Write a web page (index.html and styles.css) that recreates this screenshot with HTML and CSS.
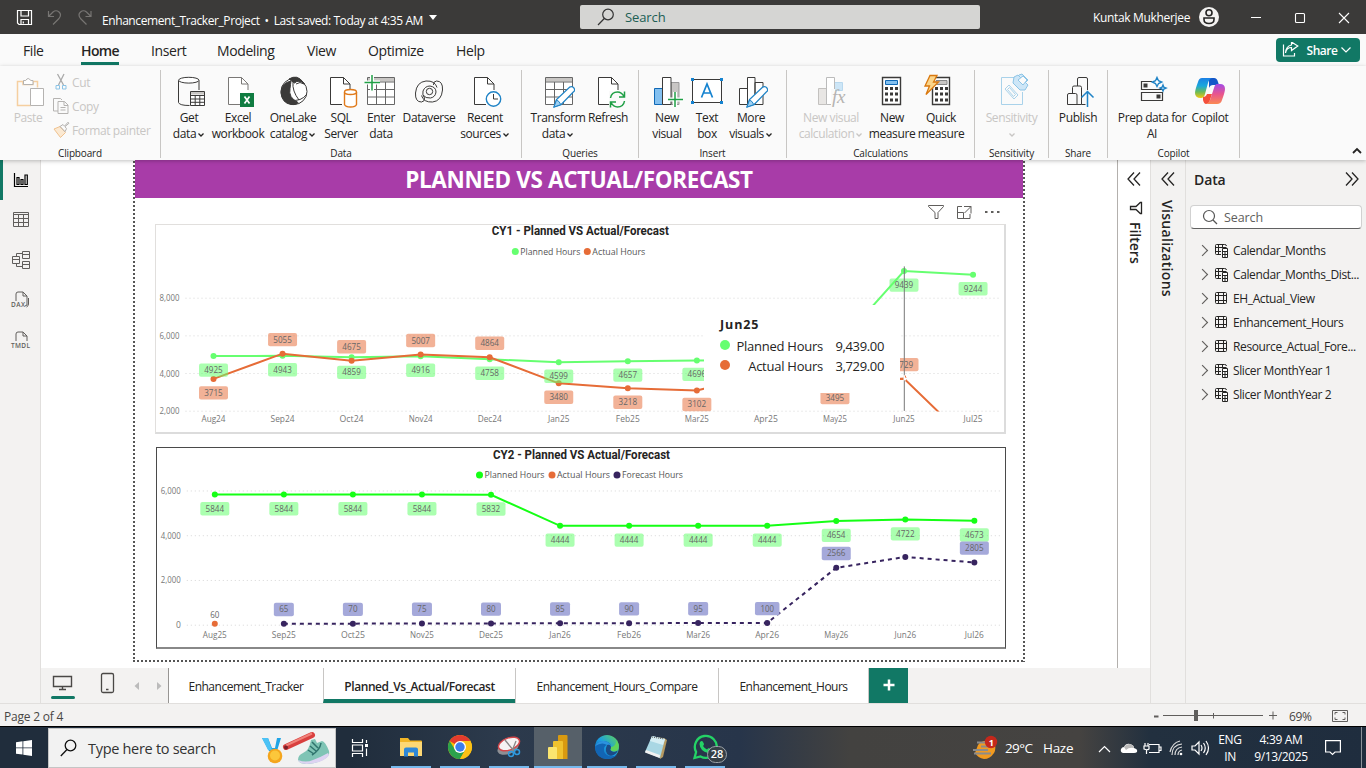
FILE: index.html
```html
<!DOCTYPE html>
<html lang="en">
<head>
<meta charset="utf-8">
<title>Enhancement_Tracker_Project</title>
<link rel="stylesheet" href="styles.css">
</head>
<body>
<svg width="0" height="0" class="defs">
  <defs>
    <symbol id="page" viewBox="0 0 34 34"><path d="M7.500 2.500h13l6.500 6.500v21h-19.500z" fill="#fff" stroke="none"/><path d="M19 29.500H7.500v-27h13l6.500 6.500v6M20.500 2.500v6.500h6.500"/></symbol>
    <symbol id="pencil" viewBox="0 0 34 34"><path d="M13 32l2.500-7.500L28.500 12.200q3-1.500 4.500 1t-.5 3.600L20 29.600z" fill="#fff" stroke="#1f83c6" stroke-width="1.300"/><path d="M13 32l2.500-7q3 1 4.300 4.600z" fill="#9fd0f2" stroke="#1f83c6"/></symbol>
    <symbol id="tbl" viewBox="0 0 16 16"><path d="M3.500 2.500h9q1 0 1 1v9q0 1-1 1h-9q-1 0-1-1v-9q0-1 1-1zM5.500 2.500v11M10.500 2.500v11M2.500 5.500h11M2.500 10.500h11" fill="none" stroke="#252423"/></symbol>
    <symbol id="ctbl" viewBox="0 0 16 16"><path d="M8 12.500H3.500q-1 0-1-1v-8q0-1 1-1h8q2 0 2 1.500M5.500 2.500v10M9.500 2.500v3M2.500 5.500h11M2.500 9.500H8" fill="none" stroke="#252423"/><path d="M9.500 6.500h5v9h-5z" fill="#fff" stroke="#252423"/><path d="M9.500 9.500h5M9.500 12.500h5M12 9.500v6" stroke="#252423" fill="none"/></symbol>
    <symbol id="dbl" viewBox="0 0 16 16"><path d="M8 1.500L2 8l6 6.500M14 1.500L8 8l6 6.500" fill="none" stroke="#252423" stroke-width="1.300"/></symbol>
    <symbol id="chev" viewBox="0 0 8 6"><path d="M1.500 1.500L4 4l2.500-2.500" fill="none" stroke="currentColor" stroke-width="1.300"/></symbol>
    <linearGradient id="cpA" x1="0" y1="0" x2="0" y2="1"><stop offset="0" stop-color="#1b7fe5"/><stop offset=".4" stop-color="#19a8dc"/><stop offset=".7" stop-color="#6dbb57"/><stop offset="1" stop-color="#f4c80f"/></linearGradient>
    <linearGradient id="cpB" x1="0" y1="0" x2="0" y2="1"><stop offset="0" stop-color="#a34be6"/><stop offset=".5" stop-color="#e8548f"/><stop offset="1" stop-color="#fb8a52"/></linearGradient>
    <linearGradient id="edgeG" x1="0" y1="1" x2="1" y2="0"><stop offset="0" stop-color="#0c59a4"/><stop offset=".5" stop-color="#1b9de2"/><stop offset="1" stop-color="#64d84e"/></linearGradient>
  </defs>
</svg>

<header class="titlebar">
  <svg class="quick" width="84" height="34" viewBox="0 0 84 34" fill="none"><path d="M4 10.500h14v14H5.500L4 23z M7.500 10.500v5.500h7.500v-5.500M7.500 24.500v-5h7.500v5M9.800 21.500v2" transform="translate(.5 0)" stroke="#fff" stroke-width="1.200"/><path d="M35.500 11v5.500h5.500M35.500 16.500l4.500-4.500q3-2.500 6 0t0 6.500l-6 6" stroke="#777573" stroke-width="1.200"/><path d="M78 11v5.500h-5.500M78 16.500l-4.500-4.500q-3-2.500-6 0t0 6.500l6 6" stroke="#777573" stroke-width="1.200"/></svg>
  <span class="doc">Enhancement_Tracker_Project<i>•</i>Last saved: Today at 4:35 AM</span>
  <span class="caret"></span>
  <div class="topsearch"><svg width="18" height="18" viewBox="0 0 18 18" fill="none" stroke="#333" stroke-width="1.200"><circle cx="11" cy="6.500" r="5.300"/><path d="M7.300 10.500L1 17"/></svg><span>Search</span></div>
  <span class="user">Kuntak Mukherjee</span>
  <svg class="avatar" width="20" height="20" viewBox="0 0 20 20"><circle cx="10" cy="10" r="10" fill="#f3f2f1"/><circle cx="10" cy="5.800" r="3" fill="none" stroke="#252423" stroke-width="1.600"/><path d="M5 11h10v1.500q0 4-5 4t-5-4z" fill="none" stroke="#252423" stroke-width="1.600"/></svg>
  <svg class="winbtns" width="110" height="34" viewBox="0 0 110 34" fill="none" stroke="#fff" stroke-width="1.100"><path d="M5 17.500h10M93 13l10 10M103 13L93 23"/><rect x="49.500" y="13.500" width="9" height="9" rx="1"/></svg>
</header>

<nav class="menu">
  <span class="m1">File</span><span class="m2">Home</span><span class="m3">Insert</span><span class="m4">Modeling</span><span class="m5">View</span><span class="m6">Optimize</span><span class="m7">Help</span>
  <button class="share"><svg width="18" height="16" viewBox="0 0 18 16" fill="none" stroke="#fff" stroke-width="1.200"><path d="M1.500 2.500v11.500h11v-3M3.500 11q1-5.500 6-5.500V8.500L15.800 4 9.500 0v3Q4 4 3.500 11z"/></svg><span>Share</span><svg width="12" height="8" viewBox="0 0 12 8" fill="none" stroke="#fff" stroke-width="1.200"><path d="M1.500 1.500L6 6l4.500-4.500"/></svg></button>
</nav>

<section class="ribbon">
  <div class="group g-clip">
    <div class="clip">
      <div class="btn off paste"><svg class="ic" viewBox="0 0 34 34"><path d="M20 30.500H6.500V6.500h6M22 6.500h4.500v6M12 9.500h10V6.500h-2.500q-2.500-4-5 0H12z" stroke="#f5cfa0" stroke-width="1.500"/><path d="M12.500 9.500v-4h2.200q2.500-4 5 0h2.300v4zM19.500 13.500h13v17h-13z" fill="#fff" stroke="#b5b3b1"/></svg><span>Paste</span></div>
      <div class="clipcol off">
        <div><svg width="18" height="18" viewBox="0 0 18 18"><path d="M5.500 1l6 11M12 1L6.500 12" stroke="#aaa" stroke-width="1.300"/><path d="M4 12.500h3.500V16H4zM10.500 12.500H14V16h-3.500z" stroke="#8cc4e6"/></svg>Cut</div>
        <div><svg width="18" height="18" viewBox="0 0 18 18"><path d="M6 14H1.500V1.500h7L10 3M6 4.500h6.500l3.500 3.500v8.500H6zM12 4.500v4h4M8.500 10.500h5M8.500 13h5" stroke="#b5b3b1"/></svg>Copy</div>
        <div><svg width="18" height="18" viewBox="0 0 18 18"><path d="M2 8l6-2.500 5.500 6-5 5z" fill="#fbe9d2" stroke="#f0c28f"/><path d="M8 5.500l3-2 1.500 1.700 3.500-4 1 1-4 3.500 1.500 2-1.500 3z" stroke="#b5b3b1"/></svg>Format painter</div>
      </div>
    </div>
    <b>Clipboard</b>
  </div>
  <div class="group g-data"><div class="row">
    <div class="btn w48"><svg class="ic" viewBox="0 0 34 34"><path d="M27 15V5.500M6.500 5.500v22q1 3 11 3" /><ellipse cx="16.800" cy="5.200" rx="10.200" ry="2.900" fill="#fff"/><path d="M18.500 16.500h14v14h-14z" fill="#fff"/><path d="M18.500 20.500h14M18.500 24h14M18.500 27.300h14M23.200 20.500v10M27.800 20.500v10"/><path d="M19 17h13v2.500H19z" fill="#c8c6c4" stroke="none"/></svg><span>Get<br>data<svg class="cv"><use href="#chev"/></svg></span></div>
    <div class="btn w50"><svg class="ic" viewBox="0 0 34 34"><use href="#page" stroke="#7a7876"/><path d="M19 18h14v14H19z" fill="#107c41" stroke="none"/><path d="M23.500 21.500l5 7M28.500 21.500l-5 7" stroke="#fff" stroke-width="1.700"/></svg><span>Excel<br>workbook</span></div>
    <div class="btn w60"><svg class="ic" viewBox="0 0 34 34"><circle cx="18" cy="16.500" r="13" fill="#fff"/><path d="M13 4q8-5 14 3l1.500 2q-6-5-10-1z" fill="#3b3a39"/><path d="M15 6Q5 8 5 18q1 10 10 11.500 6 .5 7-2-10-5-8-14 .5-4 1-7.500z" fill="#3b3a39"/><path d="M17 7q-1 9 6 18M15 25q10 2 16-6M20 9q4-3 8 0" /></svg><span>OneLake<br>catalog<svg class="cv"><use href="#chev"/></svg></span></div>
    <div class="btn w36"><svg class="ic" viewBox="0 0 34 34"><use href="#page" x="-1"/><path d="M20.500 17v12.500q1 2.500 6 2.500t6-2.500V17" fill="#fff" stroke="#e07a1a" stroke-width="1.400"/><ellipse cx="26.500" cy="17" rx="6" ry="2.500" fill="#fff" stroke="#e07a1a" stroke-width="1.400"/></svg><span>SQL<br>Server</span></div>
    <div class="btn w44"><svg class="ic" viewBox="0 0 34 34"><path d="M3.500 2.500h27v27h-27z" fill="#fff" stroke="#666"/><path d="M4 3h26v3.500H4z" fill="#c8c6c4" stroke="none"/><path d="M3.500 7h27M3.500 14.500h27M3.500 22h27M12.500 7v22.500M21.500 7v22.500" stroke="#666"/><path d="M8 0v16M.5 7.500H16" stroke="#fff" stroke-width="4"/><path d="M8 0v15.500M.5 7.500H16" stroke="#1f9f45" stroke-width="1.500"/></svg><span>Enter<br>data</span></div>
    <div class="btn w52"><svg class="ic" viewBox="0 0 34 34" ><path d="M9.500 27Q3 27 3.500 18 4.500 7 14 6q9-.5 11 6.500M9.500 27q3.500-.5 3-4-2.500-3-1.500-7 2-5 7-5 6 1 6 6-.5 5-5.500 6-5 .5-7.500-3M24.500 6Q31 6 30.500 15q-1 11-10 12-9 .5-11-6.500M24.500 6q-3.500.5-3 4"/><circle cx="17.500" cy="16.500" r="3.200"/></svg><span>Dataverse</span></div>
    <div class="btn w60"><svg class="ic" viewBox="0 0 34 34"><use href="#page" x="-1"/><circle cx="25.500" cy="24" r="7.200" fill="#fff" stroke="#1f83c6" stroke-width="1.400"/><path d="M25.500 19v5h4.500"/></svg><span>Recent<br>sources<svg class="cv"><use href="#chev"/></svg></span></div>
  </div><b>Data</b></div>
  <div class="group g-q"><div class="row">
    <div class="btn w56"><svg class="ic" viewBox="0 0 34 34"><path d="M4.500 2.500h27v27h-27z" fill="#fff" stroke="#666"/><path d="M5 3h26v3.500H5z" fill="#c8c6c4" stroke="none"/><path d="M4.500 7h27M4.500 14.500h27M4.500 22h27M13.500 7v22.500M22.500 7v22.500" stroke="#666"/><use href="#pencil"/></svg><span>Transform<br>data<svg class="cv"><use href="#chev"/></svg></span></div>
    <div class="btn w44"><svg class="ic" viewBox="0 0 34 34"><use href="#page"/><path d="M18 16h16v16H18z" fill="#fafafa" stroke="none"/><path d="M19.500 23q1-6 7-6 4 0 6.500 4.500M33.500 16.500v5.500h-5.500M33.500 26q-1 6-7 6-4 0-6.500-4.500M19.500 32.500V27H25" stroke="#1f9f45" stroke-width="1.500"/></svg><span>Refresh</span></div>
  </div><b>Queries</b></div>
  <div class="group g-ins"><div class="row">
    <div class="btn w38"><svg class="ic" viewBox="0 0 34 34"><path d="M4.500 13.500h8v16h-8z" fill="#83c0f0" stroke="#1068b5"/><path d="M21 7.500h8v22h-8z" fill="#c8c6c4" stroke="#999"/><path d="M12.500 2.500h8.500v27h-8.500z" fill="#fff"/><path d="M25 17v15M18 24.500h15" stroke="#fff" stroke-width="4"/><path d="M25 17v15M18 24.500h15" stroke="#1f9f45" stroke-width="1.500"/></svg><span>New<br>visual</span></div>
    <div class="btn w42"><svg class="ic" viewBox="0 0 34 34"><path d="M2.500 4.500h29v23h-29z" fill="#fff"/><path d="M1 3h3v3H1zM30 3h3v3h-3zM1 26h3v3H1zM30 26h3v3h-3z" fill="#1583d0" stroke="none"/><path d="M11.500 22.500L17 9l5.500 13.500M13.300 18h7.500" stroke="#1583d0" stroke-width="1.700"/></svg><span>Text<br>box</span></div>
    <div class="btn w46"><svg class="ic" viewBox="0 0 34 34"><path d="M5.500 13.500h8v16h-8zM21 7.500h8v22h-8zM13.500 2.500H21v27h-7.500z" fill="#fff"/><use href="#pencil"/></svg><span>More<br>visuals<svg class="cv"><use href="#chev"/></svg></span></div>
  </div><b>Insert</b></div>
  <div class="group g-calc"><div class="row">
    <div class="btn w68 off"><svg class="ic" viewBox="0 0 34 34"><path d="M4.500 13.500h8v16h-8z" fill="#e8e6e4" stroke="#c3c1bf"/><path d="M20.500 7.500h8v8h-8z" fill="#cde6f7" stroke="#b8d8ee"/><path d="M12.500 2.500h8v27h-8z" fill="#fff" stroke="#bbb"/><path d="M17 14h4v18h-4z" fill="#fafafa" stroke="none"/><text x="18" y="28" class="fx">fx</text></svg><span>New visual<br>calculation<svg class="cv"><use href="#chev"/></svg></span></div>
    <div class="btn w54"><svg class="ic" viewBox="0 0 34 34"><path d="M7.500 2.500h18v27h-18z" fill="#fff" stroke-width="1.400"/><path d="M10.500 5.500h12v4h-12z" fill="#83c0f0" stroke="#1068b5"/><path d="M10 13.500h13M10 19h13M10 25h13" stroke-width="3" stroke-dasharray="3 2"/></svg><span>New<br>measure</span></div>
    <div class="btn w44"><svg class="ic" viewBox="0 0 34 34"><path d="M8.500 2.500h17v27h-17z" fill="#fff" stroke-width="1.400"/><path d="M12 5.500h11v4H12z" fill="#c8c6c4" stroke="#888"/><path d="M11 13.500h13M11 19h13M11 25h13" stroke-width="3" stroke-dasharray="3 2"/><path d="M6 .500h7l-3.500 6.500h5L2 19.500 5.500 11H1z" fill="#fbd58a" stroke="#d9780f" stroke-width="1.300"/></svg><span>Quick<br>measure</span></div>
  </div><b>Calculations</b></div>
  <div class="group g-sens"><div class="row">
    <div class="btn w74 off"><svg class="ic" viewBox="0 0 34 34"><path d="M21 2.500H6.500v27h21V17" stroke="#a9d2ea"/><path d="M10 14l4-4 9 10-4 4zM12.500 14.500l2-2 6 7-2 2z" stroke="#a9d2ea"/><path d="M19 2l4-2 10 10-3 5-5 0-7-7zM24 0l3-1 6 6-2 2" fill="#cde6f7" stroke="#8cc4e6"/><path d="M23 5l5-4 4 4-4 5z" fill="#fafafa" stroke="#8cc4e6"/></svg><span>Sensitivity<br><svg class="cv"><use href="#chev"/></svg></span></div>
  </div><b>Sensitivity</b></div>
  <div class="group g-share"><div class="row">
    <div class="btn w58"><svg class="ic" viewBox="0 0 34 34"><path d="M6.500 29.500v-9.500q0-1.500 1.500-1.500h6.500q1.500 0 1.500 1.500v9.500zM11.500 18.500v-6q0-1.500 1.500-1.500h6q1.500 0 1.500 1.500v17H16M16.500 11V4q0-1.500 1.500-1.500h7q1.500 0 1.500 1.500v11M20.500 29.500h4"/><path d="M26.500 32V16M20.500 22.500l6-6 6 6" stroke="#1f83c6" stroke-width="1.500"/></svg><span>Publish</span></div>
  </div><b>Share</b></div>
  <div class="group g-cop"><div class="row">
    <div class="btn w76"><svg class="ic" viewBox="0 0 34 34"><path d="M17 6.500H6.500v8h21V13M6.500 17.500h21v8h-21z" stroke-width="1.200"/><path d="M8.500 8.500h4v4h-4zM21.500 19.500h4v4h-4z" fill="#3b3a39" stroke="none"/><path d="M22 2.500l1.500 3.200 3.200 1.300-3.200 1.500L22 11.500l-1.500-3L17.300 7l3.200-1.300zM28 10l.8 2.200 2.200.8-2.200 1-.8 2-.9-2-2.100-1 2.100-.8z" fill="#fff" stroke="#1f83c6" stroke-width="1.400"/></svg><span>Prep data for<br>AI</span></div>
    <div class="btn w40"><svg class="ic" viewBox="0 0 34 34" stroke="none"><path stroke="none" fill="#1457c8" d="M16 3h5q3 0 4 4l1 3h-6q-3 0-4 3z"/><path stroke="none" fill="url(#cpA)" d="M9 3h10q-3 1-4 5l-3 11q-1 4-4 4-6 0-6-5 0-3 3-11 1-4 4-4z"/><path stroke="none" fill="#f4503c" d="M10 22q3 0 4-3h5l-2 6q-1 4-4 4-2 0-3-4z"/><path stroke="none" fill="url(#cpB)" d="M24 9h3q5 0 5 5 0 3-3 11-1 4-5 4H13q3-1 4-4l4-12q1-4 3-4z"/></svg><span>Copilot</span></div>
  </div><b>Copilot</b></div>
  <svg class="collapse" width="10" height="8" viewBox="0 0 10 8" fill="none" stroke="#252423" stroke-width="1.800"><path d="M1 6l4-4 4 4"/></svg>
</section>

<main class="main">
  <aside class="rail">
    <div class="on"><svg width="20" height="20" viewBox="0 0 20 20" fill="none" stroke="#000" stroke-width="1.200"><path d="M3.500 3v13.500H17M6 7.500h2v7H6zM10 9.500h2v5h-2zM14 5h2.300v9.500H14z"/></svg></div>
    <div><svg width="20" height="20" viewBox="0 0 20 20"><path d="M2.500 2.500h15v14h-15zM2.500 4.500h15M2.500 8.500h15M2.500 12.500h15M7.500 4.500v12M12.500 4.500v12"/></svg></div>
    <div><svg width="20" height="20" viewBox="0 0 20 20"><path d="M1.500 6.500h7v7h-7zM1.500 9.500h7M11.500 1.500h7v7h-7zM11.500 4.500h7M11.500 11.500h7v7h-7zM11.500 14.500h7M5.500 6.500v-3h6M5.500 13.500v3h6"/></svg></div>
    <div><svg width="22" height="22" viewBox="0 0 22 22"><path d="M6 12V5q0-2 2-2h5l4 4v9l-2 1M13 3v4h4M18.500 9v6q0 2-2 3" /><text x="1" y="18" textLength="14" class="tiny">DAX</text></svg></div>
    <div><svg width="22" height="22" viewBox="0 0 22 22"><path d="M6 12V5q0-2 2-2h5l4 4v5M13 3v4h4"/><text x="1" y="18.500" textLength="19" class="tiny">TMDL</text></svg></div>
  </aside>
  <div class="center">
    <div class="canvas">
      <div class="report">
        <h1>PLANNED VS ACTUAL/FORECAST</h1>
        <div class="tools"><svg width="76" height="24" viewBox="0 0 76 24" fill="none" stroke="#605e5c"><path d="M.5 6.500h15v1L10 13.500v6H7v-6L.500 7.500zM34 7.500h-4.500v12h12.500V15M29.500 13.500h6v6M36 7.500h7v7M43 7.500l-6.500 6.500"/><path d="M57 13h2.500M63 13h2.500M69 13h2.500" stroke-width="2.200"/></svg></div>
        <div class="chart c1">
          <svg id="chart1" width="848" height="207" viewBox="156.200 225.600 848 207"></svg>
          <div class="tip"><strong>Jun25</strong><div><i class="g"></i><span>Planned Hours</span><em>9,439.00</em></div><div><i class="o"></i><span>Actual Hours</span><em>3,729.00</em></div></div>
        </div>
        <div class="chart c2"><svg id="chart2" width="847" height="199" viewBox="157 448 847 199"></svg></div>
      </div>
    </div>
    <div class="pages">
      <div class="views"><svg width="127" height="35" viewBox="0 0 127 35" fill="none"><path d="M12.500 8.500h18v10h-18zM18 21.500h7M21.500 19v2" stroke="#4a4846" stroke-width="1.400"/><rect x="60.500" y="5.500" width="12" height="19" rx="1.500" stroke="#4a4846" stroke-width="1.300"/><path d="M65 21.500h2.500" stroke="#4a4846" stroke-width="1.500"/><rect x="10" y="28" width="24" height="3" rx="1.500" fill="#117865"/><path d="M98 14v8l-4.500-4zM116 14v8l4.500-4z" fill="#bbb"/></svg></div>
      <span class="pg p1">Enhancement_Tracker</span><span class="pg p2">Planned_Vs_Actual/Forecast</span><span class="pg p3">Enhancement_Hours_Compare</span><span class="pg p4">Enhancement_Hours</span><span class="add"><svg width="12" height="12" viewBox="0 0 12 12"><path d="M6 0.500v11M.5 6h11" stroke="#fff" stroke-width="2.500"/></svg></span>
    </div>
  </div>
  <aside class="side filters"><svg width="16" height="16"><use href="#dbl"/></svg><svg class="fun" width="14" height="14" viewBox="0 0 14 14" fill="none" stroke="#252423" stroke-width="1.300"><path d="M12.500 1.500v11h-1.200L7 8.500H1.500v-3H7l4.300-4z"/></svg><span>Filters</span></aside>
  <aside class="side viz"><svg width="16" height="16"><use href="#dbl"/></svg><span>Visualizations</span></aside>
  <aside class="data">
    <div class="head"><h2>Data</h2><svg class="flip" width="16" height="16"><use href="#dbl"/></svg></div>
    <div class="find"><svg width="16" height="16" viewBox="0 0 16 16" fill="none" stroke="#555" stroke-width="1.200"><circle cx="7" cy="7" r="5.500"/><path d="M11 11l4 4"/></svg>Search</div>
    <ul id="tables">
      <li><s></s><svg><use href="#ctbl"/></svg>Calendar_Months</li><li><s></s><svg><use href="#ctbl"/></svg>Calendar_Months_Dist...</li><li><s></s><svg><use href="#tbl"/></svg>EH_Actual_View</li><li><s></s><svg><use href="#tbl"/></svg>Enhancement_Hours</li><li><s></s><svg><use href="#tbl"/></svg>Resource_Actual_Fore...</li><li><s></s><svg><use href="#ctbl"/></svg>Slicer MonthYear 1</li><li><s></s><svg><use href="#ctbl"/></svg>Slicer MonthYear 2</li>
    </ul>
  </aside>
</main>

<footer class="status"><span>Page 2 of 4</span>
  <svg width="130" height="22" viewBox="0 0 130 22" fill="none" stroke="#605e5c"><path d="M4 11.500h4.500" stroke-width="2"/><path d="M13 10.500h100M63.500 8v5.500M119 10.500h8M123 6.500v8"/><path d="M44 5h4v11h-4z" fill="#605e5c" stroke="none"/></svg>
  <span class="pct">69%</span><svg width="16" height="12" viewBox="0 0 16 12" fill="none" stroke="#605e5c"><path d="M.5.500h15v11H.5zM3 4.500v-2h2.500M10.500 2.500H13v2M3 7.500v2h2.500M10.500 9.500H13v-2"/></svg>
</footer>

<footer class="taskbar">
  <div class="start"><svg width="16" height="16" viewBox="0 0 16 16" fill="#fff"><path d="M0 2.200L6.500 1.300v6.200H0zM7.300 1.200L16 0v7.500H7.300zM0 8.300h6.500v6.300L0 13.700zM7.300 8.300H16V16l-8.700-1.200z"/></svg></div>
  <div class="tsearch"><svg width="17" height="18" viewBox="0 0 17 18" fill="none" stroke="#111" stroke-width="1.300"><circle cx="10.500" cy="6.500" r="5.300"/><path d="M7 10.500L.8 17"/></svg><span>Type here to search</span>
    <svg class="art" width="70" height="38" viewBox="0 0 70 38"><path d="M1 10h6l4 10h3l2-10h4l-4 13H8z" fill="#1fa4e6"/><path d="M1 10h6l4 12H7z" fill="#4cc2f5"/><circle cx="14" cy="28" r="7.300" fill="#f4a51c"/><circle cx="14" cy="27.500" r="5" fill="#fcc73b"/><path d="M25 19L51 7" stroke="#d9403f" stroke-width="6" stroke-linecap="round"/><path d="M25 17.500L51 5.500" stroke="#f0827a" stroke-width="2"/><circle cx="25" cy="19.500" r="2" fill="#7c1f28"/><path d="M37 32q0-5 5-7 6-2 8-13l4-1 2 4 5-2q3 0 7 10 1 4-3 7-7 5-18 6-9 0-10-4z" fill="#7fc4b5"/><path d="M37 32q8 3 15 0 8-3 15-7l1 2q-2 4-10 7-18 5-21-2z" fill="#ddd3f2"/><path d="M51 14l6 6M49 18l6 5M47 22l6 4M60 15q-1 7-9 12" stroke="#2f746d" stroke-width="1.500" fill="none"/></svg>
  </div>
  <div class="app tv"><svg width="18" height="18" viewBox="0 0 18 18" fill="none" stroke="#fff" stroke-width="1.200"><path d="M1.500 0v3.500h10V0M1.500 18v-3.500h10V18M1.500 6h10v6h-10zM15.500 1v3M15.500 9.500V17"/><path d="M14 5h3v3h-3z" fill="#fff" stroke="none"/></svg></div>
  <div class="app run"><svg viewBox="0 0 26 26"><path d="M2 4h8l2 2.500h11q1 0 1 1V22H2z" fill="#f2b626"/><path d="M2 8h22v14H2z" fill="#fdd875"/><path d="M6 22.500v-7q0-2 2-2h10q2 0 2 2v7h-4v-4h-6v4z" fill="#2f88d8"/></svg></div>
  <div class="app run"><svg viewBox="0 0 26 26"><circle cx="13" cy="13" r="12" fill="#fbbc05"/><path d="M13 13L2.600 7A12 12 0 0 1 23.400 7z" fill="#e33b2e"/><path d="M2.600 7A12 12 0 0 0 13 25l5.500-9.500L13 13 8 15.500z" fill="#2ba24c"/><path d="M13 7h10.400A12 12 0 0 1 13 25l5.500-9.500z" fill="#fbc116"/><circle cx="13" cy="13" r="6" fill="#fff"/><circle cx="13" cy="13" r="4.700" fill="#3b7ded"/></svg></div>
  <div class="app run"><svg viewBox="0 0 26 26"><ellipse cx="12" cy="14" rx="11" ry="6" fill="#8d8f94" transform="rotate(-20 12 14)"/><ellipse cx="13" cy="10" rx="11" ry="6" fill="#f5f3f3" stroke="#d3464a" stroke-width="1.500" transform="rotate(-20 13 10)"/><path d="M9 6l9 11M20 7l-4 10" stroke="#888" stroke-width="1.300"/><circle cx="15" cy="20" r="2.500" fill="none" stroke="#2f9be0" stroke-width="1.500"/><circle cx="21" cy="18" r="2.500" fill="none" stroke="#2f9be0" stroke-width="1.500"/></svg></div>
  <div class="app run act"><svg viewBox="0 0 26 26"><path d="M13 1.500q0-.5 1-.5h7.500q1 0 1 1v23H13z" fill="#d99a10"/><path d="M8 8q0-1 1-1h8q1 0 1 1v17H8z" fill="#f0c22e"/><path d="M3 14q0-1 1-1h7q1 0 1 1v11H4q-1 0-1-1z" fill="#fbe56f"/></svg></div>
  <div class="app run"><svg viewBox="0 0 26 26"><circle cx="13" cy="13" r="12" fill="url(#edgeG)"/><path d="M1 14q1-7 9-7 5 .5 7 4-5-2-7 3-1 6 5 8 4 1 8-1-4 4-10 4Q2 24 1 14z" fill="#1265b4"/><path d="M1.200 12q3-5.500 8.800-5 5 .5 7.500 5-2-2-4.500-1Q8 7.500 1.200 12z" fill="#2b92df"/><path d="M13 11q4-1 4 2.500-1 2.500.5 3.500 3 1.500 6.500-.5-3 6-8.500 5-6-3-2.500-10.500z" fill="#1b4b86"/><path d="M17 13q0 2-.500 3 2 2.500 7 .5l1-2q1-5-2-8-1 6-5.500 6.500z" fill="#5fd35a"/></svg></div>
  <div class="app run"><svg viewBox="0 0 26 26"><path d="M9 3l12 1 3 2-4 17-3 2z" fill="#b69a62"/><path d="M9 2l13 3-5 19L2 18z" fill="#a9d7e4"/><path d="M9 2l13 3-2 6L7 7z" fill="#d6eef4"/><path d="M3 16l14 5-.5 3L2 18.500z" fill="#f2f2f2"/><path d="M9 3l12 2" stroke="#555" stroke-dasharray="1 1"/></svg></div>
  <div class="app run wa"><svg viewBox="0 0 26 26"><path d="M2.500 24l1.600-6A11 11 0 1 1 8.500 22.500z" fill="none" stroke="#24d366" stroke-width="2.300"/><path d="M8 8q2-2 3 0l1 2q0 1-1 2 2 3 4 3.500 1-1.500 2-1.500l2.500 1.500q0 3-3.500 3.500Q8 17 7.500 10z" fill="#24d366"/></svg><span class="badge">28</span></div>
  <div class="tray">
    <svg class="wx" width="26" height="26" viewBox="0 0 26 26"><path d="M6 10a10 9 0 0 1 17 0q1 5-1 8-4 6-10 6-6-1-9-6z" fill="#f19a20"/><path d="M5 7.500h9M9 11.500h8M1 15h15M2 18.500h17" stroke="#8b8b8b" stroke-width="2"/><circle cx="19" cy="7" r="6.200" fill="#c4281c"/><text x="16.700" y="10.500" class="one">1</text></svg>
    <span class="temp">29°C</span><span class="haze">Haze</span>
    <svg class="sys" width="112" height="26" viewBox="0 0 112 26" fill="none" stroke="#fff" stroke-width="1.200"><path d="M1 17l5.500-5.500L12 17"/><path d="M25 18q-3-1-2-4 1-2 3-2 2-4 6-3 4 1 4 4 4 1 3 4-1 1-3 1z" fill="#fff" stroke="none"/><path d="M26 12q2-3 6-3 4 1 4 4-5-1-8 2z" fill="#b9b9b9" stroke="none"/><path d="M51 9.500h10v8H51M61.500 12h1.500v3.500h-1.500M47 8v3M50 8v3M46 11h5v3q-2 1.500-5 0zM48.500 15v4"/><path d="M74 20q0-10 10-11M77 20q0-7 7-8M80 20q0-4 4-5M72 17q2-9 10-11" stroke="#ddd"/><circle cx="83" cy="19" r="1.300" fill="#fff" stroke="none"/><path d="M94 11h3l4-4v12l-4-4h-3zM103 10q2 3 0 6M105.500 8q3.500 5 0 10M108 6q5 7 0 14"/></svg>
    <span class="lang">ENG<br>IN</span><span class="clock">4:39 AM<br>9/13/2025</span>
    <svg class="note" width="16" height="16" viewBox="0 0 16 16" fill="none" stroke="#fff" stroke-width="1.200"><path d="M.6.600h14.800v11.400H10l-2.500 2.500L5 12H.6z"/></svg><i class="edge"></i>
  </div>
</footer>
<script src="charts.js"></script>
</body>
</html>
```

FILE: styles.css
```css
* { box-sizing: border-box; }
body { margin: 0; width: 1366px; height: 768px; overflow: hidden; display: flex; flex-direction: column; font: 12px "Open Sans", "Noto Sans", sans-serif; color: #252423; background: #fafafa; }
.defs { position: absolute; }
svg { display: block; flex: none; }
span { white-space: nowrap; }

.titlebar { height: 34px; background: #3b3a39; color: #fff; display: flex; align-items: center; flex: none; }
.quick { margin-left: 13px; margin-right: 5px; }
.doc { width: 322px; letter-spacing: -.42px; padding-top: 6px; }
.doc i { font-style: normal; margin: 0 5px; }
.caret { margin: 0 0 0 5px; border: 4.500px solid transparent; border-top: 5px solid #fff; border-bottom: 0; }
.topsearch { margin-left: 143px; width: 400px; height: 24px; background: #d5d5d3; border-radius: 2px; display: flex; align-items: center; padding-left: 17px; color: #205e53; font-size: 13px; letter-spacing: -.1px; }
.topsearch span { margin-left: 10px; }
.user { margin-left: 113px; width: 96px; letter-spacing: -.33px; }
.avatar { margin-left: 10px; }
.winbtns { margin-left: 27px; }

.menu { height: 32px; flex: none; display: flex; align-items: center; font-size: 14px; position: relative; letter-spacing: -.4px; }
.menu > span { height: 30px; line-height: 31px; flex: none; }
.m1 { width: 58px; margin-left: 23px; }
.m2 { width: 38px; font-weight: 600; border-bottom: 3px solid #117865; letter-spacing: -.6px; }
.m3 { width: 66px; margin-left: 32px; }
.m4 { width: 90px; }
.m5 { width: 61px; }
.m6 { width: 88px; }
.m7 { width: 40px; }
.share { margin-left: auto; margin-right: 6px; width: 84px; height: 24px; background: #117865; color: #fff; border: 0; border-radius: 4px; display: flex; align-items: center; justify-content: space-between; padding: 0 8px 0 6px; font: 600 12px "Open Sans", sans-serif; letter-spacing: -.45px; }
.share span { margin-right: -4px; }

.ribbon { height: 94px; flex: none; display: flex; padding-top: 4px; position: relative; z-index: 2; box-shadow: 0 1px 4px rgba(0,0,0,.25); background: #fafafa; }
.group { border-right: 1px solid #c8c6c4; height: 88px; padding-top: 5px; display: flex; flex-direction: column; align-items: center; flex: none; }
.group > b { font-weight: 400; font-size: 10px; line-height: 14px; letter-spacing: -.15px; margin-top: auto; margin-bottom: -2px; }
.row { display: flex; align-self: flex-start; }
.g-clip { width: 161px; }
.g-data { width: 361px; padding-left: 4px; }
.g-data b { margin-left: -4px; }
.g-q { width: 117px; padding-left: 8px; padding-right: 8px; }
.g-ins { width: 148px; padding-left: 9px; padding-right: 9px; }
.g-calc { width: 188px; padding-left: 10px; padding-right: 10px; }
.g-sens { width: 74px; }
.g-share { width: 59px; }
.g-cop { width: 132px; padding-left: 6px; padding-right: 6px; }
.btn { display: flex; flex-direction: column; align-items: center; text-align: center; line-height: 16px; letter-spacing: -.4px; flex: none; }
.ic { width: 34px; height: 34px; fill: none; stroke: #3b3a39; margin-bottom: 1px; overflow: visible; }
.cv { display: inline-block; width: 8px; height: 6px; margin-left: 1px; }
.off { color: #c8c6c4; }
.w36 { width: 36px; } .w38 { width: 38px; } .w40 { width: 40px; } .w42 { width: 42px; } .w44 { width: 44px; } .w46 { width: 46px; } .w48 { width: 48px; } .w50 { width: 50px; } .w52 { width: 52px; } .w54 { width: 54px; } .w56 { width: 56px; } .w58 { width: 58px; } .w60 { width: 60px; } .w68 { width: 68px; } .w74 { width: 73px; } .w76 { width: 76px; }
.fx { font: italic 19px "Liberation Serif", serif; fill: #b5b3b1; stroke: none; }
.clip { display: flex; align-self: stretch; }
.paste { width: 34px; margin-left: 11px; }
.clipcol { margin-left: 7px; margin-top: -5px; letter-spacing: -.38px; }
.clipcol div { height: 24px; display: flex; align-items: center; gap: 2px; white-space: nowrap; }
.clipcol svg { fill: none; }
.collapse { margin-left: 112px; margin-top: 77px; }

.main { height: 544px; flex: none; display: flex; border-bottom: 1px solid #e1dfdd; }
.rail { width: 41px; background: #f3f2f1; border-right: 1px solid #e1dfdd; }
.rail div { height: 40px; display: flex; align-items: center; justify-content: center; border-left: 3px solid transparent; padding-right: 2px; }
.rail .on { border-color: #117865; }
.rail svg { fill: none; stroke: #605e5c; }
.rail .on svg { stroke: #000; }
.tiny { font: 600 6.500px "Open Sans", sans-serif; fill: #605e5c; stroke: none; }
.center { width: 1077px; display: flex; flex-direction: column; flex: none; }
.canvas { height: 508px; background: #fff; padding-left: 92px; border-right: 1px solid #b3b0ad; }
.report { width: 892px; height: 502px; padding: 0 2px; background: repeating-linear-gradient(#555 0 2px, transparent 2px 4px) 0 1px / 2px 100% no-repeat, repeating-linear-gradient(#555 0 2px, transparent 2px 4px) 100% 1px / 2px 100% no-repeat, repeating-linear-gradient(90deg, #555 0 2px, transparent 2px 4px) 0 100% / 100% 2px no-repeat; }
h1 { margin: 0; height: 38px; background: #a83ca8; color: #fff; font-size: 22.500px; line-height: 39px; text-align: center; letter-spacing: -.38px; }
.tools { height: 26px; padding-left: 793px; padding-top: 1px; }
.chart { border: 1px solid #e1dfdd; position: relative; }
.c1 { margin-left: 20px; width: 851px; height: 210px; border-bottom: 2px solid #dcdcdc; border-right: 2px solid #dcdcdc; }
.c2 { margin: 13px 0 0 21px; width: 850px; height: 202px; border-color: #4a4a4a; border-bottom: 2px solid #888; }
.ax { font: 8.500px "Open Sans", sans-serif; fill: #777; }
.lb { font: 8.500px "Open Sans", sans-serif; fill: #666; }
.ttl { font: bold 12px Roboto, sans-serif; fill: #252423; }
.lg { font: 9.500px "Open Sans", sans-serif; fill: #555; }
.tip { position: absolute; left: 548px; top: 80px; width: 196px; height: 88px; background: #fff; padding: 12px 0 0 16px; font-size: 13px; color: #252423; display: flex; flex-direction: column; }
.tip strong { letter-spacing: .9px; line-height: 16px; font-size: 12.500px; margin-bottom: 3px; }
.tip div { display: flex; align-items: center; height: 20px; }
.tip i { width: 10px; height: 10px; border-radius: 50%; background: #66ff70; margin-top: -3px; }
.tip .o { background: #e66c37; }
.tip span { width: 93px; text-align: right; letter-spacing: -.25px; }
.tip em { font-style: normal; width: 61px; text-align: right; letter-spacing: -.35px; }

.pages { height: 35px; display: flex; background: #f3f2f1; }
.views { width: 127px; }
.pg { height: 35px; background: #fff; border-left: 1px solid #c8c6c4; line-height: 37px; text-align: center; letter-spacing: -.5px; flex: none; }
.p1 { width: 155px; border-left-color: #979593; }
.p2 { width: 192px; font-weight: 600; border-bottom: 4px solid #117865; letter-spacing: -.42px; }
.p3 { width: 203px; }
.p4 { width: 150px; }
.add { width: 40px; background: #117865; display: flex; justify-content: center; padding-top: 11px; border-left: 1px solid #c8c6c4; }
.side { display: flex; flex-direction: column; align-items: center; padding-top: 11px; flex: none; }
.side span { writing-mode: vertical-rl; font-size: 14px; font-weight: 600; letter-spacing: 0; margin-right: -2px; }
.filters { width: 32px; background: #fff; border-bottom: 35px solid #f3f2f1; }
.fun { margin: 14px 0 7px 3px; }
.viz { width: 36px; background: #f3f2f1; border-left: 1px solid #e1dfdd; border-right: 1px solid #e1dfdd; }
.viz span { margin-top: 13px; letter-spacing: .3px; margin-right: 2px; }
.data { flex: 1; background: #f3f2f1; padding: 10px 4px 0 4px; }
.head { display: flex; justify-content: space-between; align-items: center; height: 18px; padding: 0 2px 0 4px; }
h2 { margin: 0; font-size: 14px; font-weight: 600; letter-spacing: -.1px; }
.flip { transform: scaleX(-1); }
.find { margin-top: 17px; height: 24px; width: 172px; background: #fff; border: 1px solid #d1d1d1; border-bottom-color: #616161; border-radius: 4px; display: flex; align-items: center; gap: 6px; padding-left: 11px; color: #605e5c; letter-spacing: -.1px; font-size: 12.500px; }
ul { list-style: none; margin: 9px 0 0; padding: 0 0 0 8px; letter-spacing: -.38px; white-space: nowrap; }
li { height: 24px; display: flex; align-items: center; }
li svg { width: 16px; height: 16px; margin: 0 4px 0 6px; }
li s { width: 7px; height: 7px; border: solid #605e5c; border-width: 1px 1px 0 0; transform: translateX(-1px) rotate(45deg) scale(1.150); margin-left: 2px; }

.status { height: 23px; flex: none; background: #f3f2f1; border-bottom: 1px solid #000; display: flex; align-items: center; color: #484644; padding: 2px 18px 0 4px; letter-spacing: -.2px; }
.status svg:first-of-type { margin-left: auto; margin-right: 9px; }
.pct { width: 43px; letter-spacing: -.4px; }
.taskbar { height: 41px; flex: none; display: flex; color: #fff; background: linear-gradient(90deg, #202d3c 0, #202d3c 350px, #2c3a4c 500px, #27354a 740px, #434240 850px, #454341 1080px, #22303f 1150px, #1f2d3e); }
.start { width: 48px; display: flex; align-items: center; justify-content: center; }
.tsearch { width: 288px; height: 40px; margin-top: 1px; background: #f2f2f2; border: 1px solid #c5c5c5; display: flex; align-items: center; padding-left: 11px; color: #333; font-size: 14.500px; letter-spacing: -.3px; }
.tsearch span { margin-left: 11px; width: 173px; }
.art { margin-top: -3px; }
.app { width: 40px; margin-right: 9px; position: relative; display: flex; align-items: center; justify-content: center; flex: none; }
.app svg { width: 26px; height: 26px; }
.tv { width: 46px; }
.tv svg { width: 18px; height: 18px; margin-left: 2px; }
.run { border-bottom: 2px solid #76b9ed; }
.act { width: 48px; margin: 0 5px 0 -4px; background: #566069; }
.badge { position: absolute; left: 22px; top: 19px; width: 20px; height: 17px; border-radius: 9px; background: #363f47; border: 1px solid #9aa1a7; font-size: 11px; line-height: 14px; text-align: center; font-weight: 600; }
.tray { margin-left: auto; display: flex; align-items: center; }
.one { font: bold 9px "Open Sans", sans-serif; fill: #fff; }
.temp { margin-left: 7px; width: 38px; font-size: 13.500px; letter-spacing: -.6px; }
.haze { font-size: 13.500px; width: 55px; letter-spacing: -.3px; }
.lang, .clock { line-height: 17px; text-align: center; letter-spacing: -.35px; }
.lang { width: 26px; margin-left: 7px; }
.clock { width: 56px; margin-left: 10px; }
.note { margin: 0 20px 0 16px; }
.edge { width: 1px; height: 41px; background: #8b929a; margin-right: 4px; }
```

FILE: charts.js
```js
const GREEN1 = '#66ff70', GREEN2 = '#15ff15', ORANGE = '#e66c37', PURPLE = '#37245f';

function text(cls, x, y, s, len, anchor) {
  return `<text class="${cls}" x="${x}" y="${y}" text-anchor="${anchor || 'middle'}"${len ? ` textLength="${len}" lengthAdjust="spacingAndGlyphs"` : ''}>${s}</text>`;
}
function draw(id, o) {
  const X = i => o.x0 + 69.05 * i, Y = v => o.base - (v - o.min) * o.k;
  let s = `<clipPath id="${id}-plot"><path d="M150 200H1010V${o.base + (o.min ? .3 : 20)}H150z"/></clipPath>`;
  s += text('ttl', o.cx, o.top + 11, o.title, 177);
  o.legend.forEach(([x, name, c, w]) => {
    s += `<circle cx="${x}" cy="${o.top + 27}" r="3.5" fill="${c}"/>` + text('lg', x + 5, o.top + 30.3, name, w, 'start');
  });
  o.ticks.forEach(v => {
    s += `<path d="M${o.x0 - 28} ${Y(v)}H${o.x0 + 786}" stroke="#d6d6d6" stroke-dasharray="1 3"/>`;
    s += text('ax', o.x0 - 34, Y(v) + 3, v.toLocaleString('en-US'), v ? 20 : 0, 'end');
  });
  o.months.forEach((m, i) => { s += text('ax', X(i), o.monthY, m, m.startsWith('Jul') ? 19 : m[0] === 'J' ? 21.5 : 24); });
  o.series.forEach(r => {
    const pts = r.v.map((v, i) => v == null ? null : [X(i), Y(v)]).filter(Boolean);
    s += `<g clip-path="url(#${id}-plot)"><polyline points="${pts.join(' ')}" fill="none" stroke="${r.c}" stroke-width="2"${r.dash ? ' stroke-dasharray="4 4"' : ''}/></g>`;
    r.v.forEach((v, i) => {
      if (v != null && !(r.hide || []).includes(i)) s += `<circle cx="${X(i)}" cy="${Y(v)}" r="3" fill="${r.c}"/>`;
    });
  });
  o.series.forEach(r => r.v.forEach((v, i) => {
    const d = r.off[i];
    if (v == null || !d) return;
    const w = v > 999 ? 29 : v > 99 ? 24.5 : 20, y = Y(v) + d;
    if (r.box) s += `<rect x="${X(i) - w / 2}" y="${y - 6.7}" width="${w}" height="13.4" rx="2" fill="${r.box}"/>`;
    s += text('lb', X(i), y + 3, v, v > 999 ? 18.5 : v > 99 ? 13.5 : 9.2);
  }));
  if (o.hover != null) {
    const x = X(o.hover);
    s += `<path d="M${x + .3} 267V411.500" stroke="#777"/><path d="M${x - .5} 375.500h2.500v5.500h-2.500z" fill="#fff"/><path d="M${x + 1} 376l1 2.500" stroke="${ORANGE}"/>`;
  }
  document.getElementById(id).innerHTML = s;
}
draw('chart1', {
  title: 'CY1 - Planned VS Actual/Forecast', cx: 580.5, top: 225, x0: 213.7, base: 411.8, min: 2000, k: .018835, monthY: 422.5, hover: 10,
  ticks: [2000, 4000, 6000, 8000],
  legend: [[515.5, 'Planned Hours', GREEN1, 60], [587.5, 'Actual Hours', ORANGE, 53]],
  months: ['Aug24', 'Sep24', 'Oct24', 'Nov24', 'Dec24', 'Jan25', 'Feb25', 'Mar25', 'Apr25', 'May25', 'Jun25', 'Jul25'],
  series: [
    { c: GREEN1, box: 'rgba(102,255,112,.55)', v: [4925, 4943, 4859, 4916, 4758, 4599, 4657, 4696, 4720, 5350, 9439, 9244], off: [14, 14, 15, 14, 14, 14, 14, 14, 0, 0, 14, 14] },
    { c: ORANGE, box: 'rgba(230,108,55,.52)', v: [3715, 5055, 4675, 5007, 4864, 3480, 3218, 3102, 4000, 3495, 3729, 190], off: [14, -14, -14, -14, -14, 14, 14, 14, 0, 14.5, -14, 0], hide: [10, 11] }
  ]
});
draw('chart2', {
  title: 'CY2 - Planned VS Actual/Forecast', cx: 581.5, top: 448, x0: 214.8, base: 625.2, min: 0, k: .02237, monthY: 638.2,
  ticks: [0, 2000, 4000, 6000],
  legend: [[479.5, 'Planned Hours', GREEN2, 60], [552, 'Actual Hours', ORANGE, 53], [617, 'Forecast Hours', PURPLE, 61]],
  months: ['Aug25', 'Sep25', 'Oct25', 'Nov25', 'Dec25', 'Jan26', 'Feb26', 'Mar26', 'Apr26', 'May26', 'Jun26', 'Jul26'],
  series: [
    { c: GREEN2, box: 'rgba(102,255,112,.55)', v: [5844, 5844, 5844, 5844, 5832, 4444, 4444, 4444, 4444, 4654, 4722, 4673], off: Array(12).fill(14.3) },
    { c: ORANGE, v: [60], off: [-9] },
    { c: PURPLE, box: '#a5a9da', dash: true, v: [null, 65, 70, 75, 80, 85, 90, 95, 100, 2566, 3050, 2805], off: [0, -14.3, -14.3, -14.3, -14.3, -14.3, -14.3, -14.3, -14.3, -14.3, 0, -14.3] }
  ]
});
```
